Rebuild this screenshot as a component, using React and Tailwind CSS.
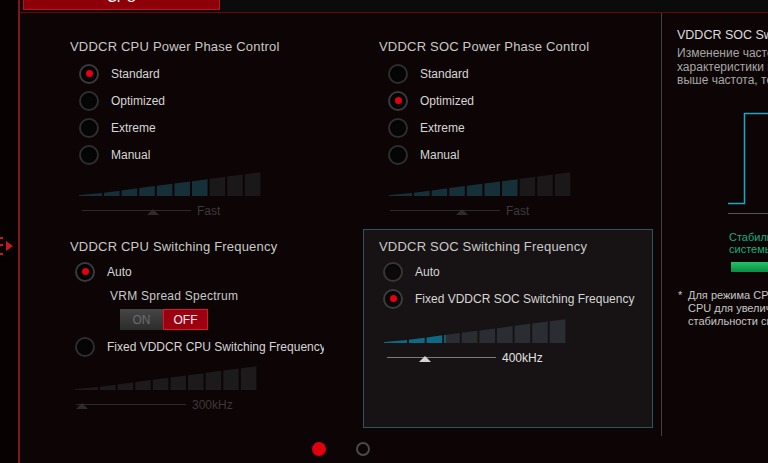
const FONT = "font-['Liberation_Sans',Arial,sans-serif]";

function Radio({ checked, label, ring = "border-[#2e2e2e]", fill = "bg-[#060505]", clip }) {
  return (
    <div className="flex items-center h-[27px] gap-[12px]">
      <div
        className={`w-[20px] h-[20px] shrink-0 rounded-full border-2 ${ring} ${fill} flex items-center justify-center shadow-[inset_0_1px_2px_rgba(0,0,0,0.8)]`}
      >
        {checked && <div className="w-[7px] h-[7px] rounded-full bg-[#e3000f]" />}
      </div>
      <span
        className={`text-[12px] text-[#d6d6d6] whitespace-nowrap ${clip ? "overflow-hidden w-[217px]" : ""}`}
      >
        {label}
      </span>
    </div>
  );
}

function Bars({ active = 0, on, off, sliver }) {
  const W = 183;
  const H = 24;
  const top = (x) => H - Math.max(1, (H * x) / W);
  const segs = [[0, 23]];
  for (let i = 0; i < 9; i++) {
    const s = 25 + i * 17.6;
    segs.push([s, s + 15.6]);
  }
  return (
    <svg width={W} height={H} className="block">
      {segs.map(([s, e], i) => (
        <polygon
          key={i}
          points={`${s},${H} ${s},${top(s)} ${e},${top(e)} ${e},${H}`}
          fill={i < active ? on : off}
        />
      ))}
      {sliver && (
        <polygon
          points={`${segs[active][0]},${H} ${segs[active][0]},${top(segs[active][0])} ${segs[active][0] + 1.5},${top(segs[active][0] + 1.5)} ${segs[active][0] + 1.5},${H}`}
          fill={on}
        />
      )}
    </svg>
  );
}

function Slider({ width, thumb, text, line, tri, textColor }) {
  return (
    <div className="flex items-center h-[22px] gap-[6px]">
      <div className="relative h-[22px]" style={{ width }}>
        <div className={`absolute left-0 right-0 top-[10px] h-px ${line}`} />
        <svg width="12" height="7" className="absolute top-[9px]" style={{ left: thumb - 6 }}>
          <polygon points="6,0 12,6 0,6" fill={tri} />
        </svg>
      </div>
      <span className={`text-[12px] ${textColor}`}>{text}</span>
    </div>
  );
}

function Title({ children }) {
  return (
    <div className="text-[13px] leading-[16px] tracking-[0.2px] text-[#c9c9c9] whitespace-nowrap">
      {children}
    </div>
  );
}

export default function App() {
  return (
    <div className={`w-[768px] h-[463px] overflow-hidden flex bg-[#0c0405] ${FONT}`}>
      {/* left strip */}
      <div className="w-[18px] shrink-0 bg-[#080102] pt-[229px]">
        <svg width="18" height="30" className="block">
          <rect x="0" y="8" width="3" height="2" fill="#c41c1c" />
          <rect x="0" y="15" width="3" height="2" fill="#c41c1c" />
          <rect x="0" y="24" width="3" height="2" fill="#c41c1c" />
          <polygon points="6,12 13,17 6,22" fill="#c41c1c" />
        </svg>
      </div>
      <div className="w-[2px] shrink-0 bg-[#7a1a1d]" />

      <div className="flex-1 flex flex-col min-w-0">
        {/* header */}
        <div className="h-[12px] bg-[#0b0b0b] pl-[3px] shrink-0">
          <div className="w-[197px] h-[10px] bg-[#8e0009] border-x border-b border-[#c2101a] overflow-hidden flex justify-center">
            <span className="text-[14px] leading-[14px] mt-[-10px] text-white">CPU</span>
          </div>
        </div>
        <div className="h-px bg-[#5e0a0d] shrink-0" />

        <div className="flex flex-1">
          {/* main settings */}
          <div className="w-[641px] shrink-0 flex flex-col pl-[34px]">
            <div className="flex h-[216px]">
              <div className="w-[309px] pl-[16px] pt-[26px]">
                <Title>VDDCR CPU Power Phase Control</Title>
                <div className="ml-[9px] mt-[5px]">
                  <Radio checked label="Standard" ring="border-[#3a3a3a]" />
                  <Radio label="Optimized" />
                  <Radio label="Extreme" />
                  <Radio label="Manual" />
                </div>
                <div className="ml-[9px] mt-[4px]">
                  <Bars active={7} on="#16303a" off="#1b1819" />
                </div>
                <div className="ml-[12px] mt-[4px]">
                  <Slider width={109} thumb={71} text="Fast" line="bg-[#2e2a2b]" tri="#2f2b2c" textColor="text-[#3e3b3b]" />
                </div>
              </div>
              <div className="w-[290px] pl-[16px] pt-[26px]">
                <Title>VDDCR SOC Power Phase Control</Title>
                <div className="ml-[9px] mt-[5px]">
                  <Radio label="Standard" />
                  <Radio checked label="Optimized" ring="border-[#3a3a3a]" />
                  <Radio label="Extreme" />
                  <Radio label="Manual" />
                </div>
                <div className="ml-[10px] mt-[4px]">
                  <Bars active={7} on="#16303a" off="#1b1819" />
                </div>
                <div className="ml-[11px] mt-[4px]">
                  <Slider width={110} thumb={72} text="Fast" line="bg-[#2e2a2b]" tri="#2f2b2c" textColor="text-[#3e3b3b]" />
                </div>
              </div>
            </div>

            <div className="flex">
              <div className="w-[309px] h-[199px] pl-[16px] pt-[10px]">
                <Title>VDDCR CPU Switching Frequency</Title>
                <div className="ml-[5px] mt-[3px]">
                  <Radio checked label="Auto" ring="border-[#3a3a3a]" />
                </div>
                <div className="ml-[40px] mt-[3px] text-[12px] leading-[16px] tracking-[0.25px] text-[#c9c9c9]">
                  VRM Spread Spectrum
                </div>
                <div className="ml-[50px] mt-[5px] flex h-[21px] text-[12px]">
                  <div className="w-[43px] h-full bg-gradient-to-b from-[#464646] to-[#2c2c2c] text-[#6c6c6c] flex items-center justify-center">
                    ON
                  </div>
                  <div className="w-[45px] h-full bg-[#9c0010] border border-[#d81a22] text-[#f2f2f2] flex items-center justify-center">
                    OFF
                  </div>
                </div>
                <div className="ml-[5px] mt-[3px]">
                  <Radio label="Fixed VDDCR CPU Switching Frequency" clip />
                </div>
                <div className="ml-[5px] mt-[6px]">
                  <Bars active={0} on="#1b1819" off="#1c1a1b" />
                </div>
                <div className="ml-[6px] mt-[4px]">
                  <Slider width={110} thumb={6} text="300kHz" line="bg-[#2e2a2b]" tri="#2f2b2c" textColor="text-[#3c3939]" />
                </div>
              </div>
              <div className="w-[290px] h-[199px] bg-[#171314] border border-[#2b5560] pt-[9px] px-[15px]">
                <Title>VDDCR SOC Switching Frequency</Title>
                <div className="ml-[4px] mt-[3px]">
                  <Radio label="Auto" ring="border-[#363636]" fill="bg-[#0b0909]" />
                  <Radio checked label="Fixed VDDCR SOC Switching Frequency" ring="border-[#3c3c3c]" fill="bg-[#0b0909]" />
                </div>
                <div className="ml-[5px] mt-[7px]">
                  <Bars active={3} on="#0e6985" off="#2a2d31" sliver />
                </div>
                <div className="ml-[8px] mt-[4px]">
                  <Slider width={109} thumb={38} text="400kHz" line="bg-[#7a7a7a]" tri="#d4d4d4" textColor="text-[#e2e2e2]" />
                </div>
              </div>
            </div>

            {/* pagination */}
            <div className="flex justify-center items-center gap-[30px] mt-[14px] pr-[34px]">
              <div className="w-[14px] h-[14px] rounded-full bg-[#e0000e]" />
              <div className="w-[14px] h-[14px] rounded-full border-2 border-[#4a4a4a]" />
            </div>
          </div>

          <div className="w-px h-[423px] shrink-0 bg-[#424242]" />

          {/* help panel */}
          <div className="flex-1 min-w-0 overflow-hidden pl-[15px] pt-[15px] whitespace-nowrap">
            <div className="text-[12.5px] leading-[14px] text-[#dedede]">VDDCR SOC Switching Frequency</div>
            <div className="mt-[5px] text-[12px] leading-[13.5px] text-[#a6a6a6]">
              <div>Изменение частоты переключения VRM</div>
              <div>характеристики и стабильность</div>
              <div>выше частота, тем быстрее отклик</div>
            </div>
            <svg width="91" height="110" className="block mt-[20px]">
              <polyline points="51,95.5 67.5,95.5 67.5,5.5 91,5.5" fill="none" stroke="#1ea6c6" strokeWidth="1.5" />
              <line x1="51" y1="105.5" x2="91" y2="105.5" stroke="#555" strokeWidth="1" />
            </svg>
            <div className="mt-[13px] pl-[52px] text-[11px] leading-[12px] text-[#12b07c]">
              <div>Стабильность</div>
              <div>системы</div>
            </div>
            <div className="mt-[7px] ml-[54px] h-[10px] bg-gradient-to-b from-[#22c46a] to-[#0c8a44]" />
            <div className="mt-[17px] flex text-[11px] leading-[13px] text-[#c6c6c6]">
              <span className="w-[11px] shrink-0 pl-px">*</span>
              <div>
                <div>Для режима CPU</div>
                <div>CPU для увеличения</div>
                <div>стабильности системы</div>
              </div>
            </div>
          </div>
        </div>
      </div>
    </div>
  );
}
